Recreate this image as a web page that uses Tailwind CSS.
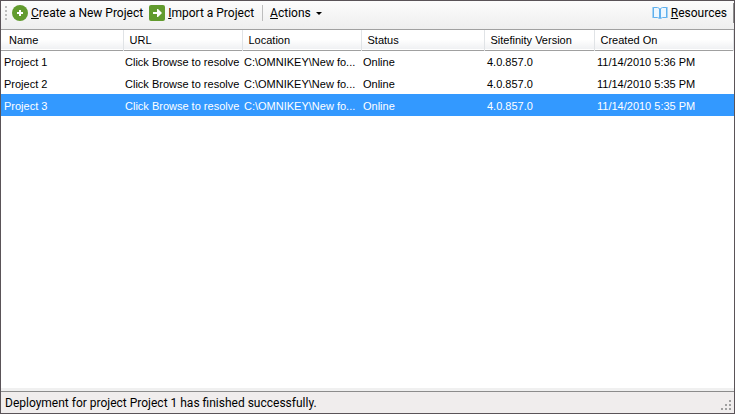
<!DOCTYPE html>
<html lang="en">

<head>
    <meta charset="UTF-8" />
    <title>Project Manager</title>
    <meta name="viewport" content="width=device-width, initial-scale=1.0" />
    <script src="https://cdn.jsdelivr.net/npm/@tailwindcss/browser@4"></script>
</head>

<body class="bg-white text-black">
    <div class="flex flex-col min-h-screen border border-[#5a5358] font-[Roboto,sans-serif] text-xs">
        <!-- Toolbar -->
        <header class="flex items-center h-7 pl-1 pb-1 bg-linear-to-b from-[#fcfcfc] to-[#eeeeee]">
            <svg class="w-1 h-4 mr-[3px] shrink-0" viewBox="0 0 4 16" fill="#bdbdbd" aria-hidden="true">
                <path d="M0 1h2v2H0zM0 5h2v2H0zM0 9h2v2H0zM0 13h2v2H0z" />
            </svg>
            <button type="button" class="flex items-center gap-[3px] mr-1.5 whitespace-nowrap">
                <svg class="size-4" viewBox="0 0 16 16" aria-hidden="true">
                    <circle cx="8" cy="8" r="8" fill="#629b2e" />
                    <path d="M7 5h2v2h2v2H9v2H7V9H5V7h2z" fill="#fff" />
                </svg>
                <span><u>C</u>reate a New Project</span>
            </button>
            <button type="button" class="flex items-center gap-[3px] whitespace-nowrap">
                <svg class="size-4" viewBox="0 0 16 16" aria-hidden="true">
                    <rect width="16" height="16" rx="2" fill="#629b2e" />
                    <path d="M4 7h4V4h1l4 4-4 4H8V9H4z" fill="#fff" />
                </svg>
                <span><u>I</u>mport a Project</span>
            </button>
            <div class="w-px h-4 ml-2 mr-[7px] bg-[#bdbdbd]"></div>
            <button type="button" class="flex items-center gap-1 whitespace-nowrap">
                <span><u>A</u>ctions</span>
                <svg class="w-2 h-4" viewBox="0 0 8 16" aria-hidden="true">
                    <path d="M1 7h6L4 10z" />
                </svg>
            </button>
            <button type="button" class="flex items-center gap-[3px] ml-auto mr-1.5 whitespace-nowrap">
                <svg class="size-4" viewBox="0 0 16 16" fill="none" stroke="#5fb0ee" aria-hidden="true">
                    <path d="M1.500 2.500h4l2 1v10l-2-1h-4zM14.500 2.500h-4l-2 1v10l2-1h4z" fill="#eef7fe" />
                    <path d="M1 2v11M15 2v11" />
                </svg>
                <span><u>R</u>esources</span>
            </button>
            <div class="w-px h-5 bg-[#8c8c8c]"></div>
        </header>

        <!-- Project list -->
        <main class="grow bg-white border-t border-[#a0a0a0] font-['Liberation_Sans',sans-serif] text-[11px]">
            <table class="w-full table-fixed text-left whitespace-nowrap">
                <colgroup>
                    <col class="w-[122px]" />
                    <col class="w-[119px]" />
                    <col class="w-[119px]" />
                    <col class="w-[123px]" />
                    <col class="w-[110px]" />
                    <col />
                </colgroup>
                <thead class="bg-linear-to-b from-white from-50% to-[#f0f1f3] border-b border-[#a0a0a0]">
                    <tr class="h-5">
                        <th class="pl-2 pt-px font-normal border-r border-[#e0e3e6]">Name</th>
                        <th class="pl-1.5 pt-px font-normal border-r border-[#e0e3e6]">URL</th>
                        <th class="pl-1.5 pt-px font-normal border-r border-[#e0e3e6]">Location</th>
                        <th class="pl-1.5 pt-px font-normal border-r border-[#e0e3e6]">Status</th>
                        <th class="pl-1.5 pt-px font-normal border-r border-[#e0e3e6]">Sitefinity Version</th>
                        <th class="pl-1.5 pt-px font-normal border-r border-[#e0e3e6]">Created On</th>
                    </tr>
                </thead>
                <tbody>
                    <tr class="h-[22px]">
                        <td class="pl-[3px] pt-0.5">Project 1</td>
                        <td class="pl-0.5 pt-0.5">Click Browse to resolve</td>
                        <td class="pl-0.5 pt-0.5">C:\OMNIKEY\New fo...</td>
                        <td class="pl-0.5 pt-0.5">Online</td>
                        <td class="pl-[3px] pt-0.5">4.0.857.0</td>
                        <td class="pl-[3px] pt-0.5">11/14/2010 5:36 PM</td>
                    </tr>
                    <tr class="h-[22px]">
                        <td class="pl-[3px] pt-0.5">Project 2</td>
                        <td class="pl-0.5 pt-0.5">Click Browse to resolve</td>
                        <td class="pl-0.5 pt-0.5">C:\OMNIKEY\New fo...</td>
                        <td class="pl-0.5 pt-0.5">Online</td>
                        <td class="pl-[3px] pt-0.5">4.0.857.0</td>
                        <td class="pl-[3px] pt-0.5">11/14/2010 5:35 PM</td>
                    </tr>
                    <tr class="h-[22px] bg-[#3399ff] text-white" aria-selected="true">
                        <td class="pl-[3px] pt-0.5">Project 3</td>
                        <td class="pl-0.5 pt-0.5">Click Browse to resolve</td>
                        <td class="pl-0.5 pt-0.5">C:\OMNIKEY\New fo...</td>
                        <td class="pl-0.5 pt-0.5">Online</td>
                        <td class="pl-[3px] pt-0.5">4.0.857.0</td>
                        <td class="pl-[3px] pt-0.5">11/14/2010 5:35 PM</td>
                    </tr>
                </tbody>
            </table>
        </main>

        <!-- Status bar -->
        <footer class="border-t-3 border-[#f0f0f0]">
            <div class="flex items-center justify-between h-[22px] pl-1 pr-px bg-[#f0eded] border-t border-[#8c8c8c]">
                <p>Deployment for project Project 1 has finished successfully.</p>
                <svg class="size-3 self-end mb-px" viewBox="0 0 12 12" fill="#a0a0a0" aria-hidden="true">
                    <path d="M8 0h2v2H8zM4 4h2v2H4zM8 4h2v2H8zM0 8h2v2H0zM4 8h2v2H4zM8 8h2v2H8z" />
                </svg>
            </div>
        </footer>
    </div>
</body>

</html>
